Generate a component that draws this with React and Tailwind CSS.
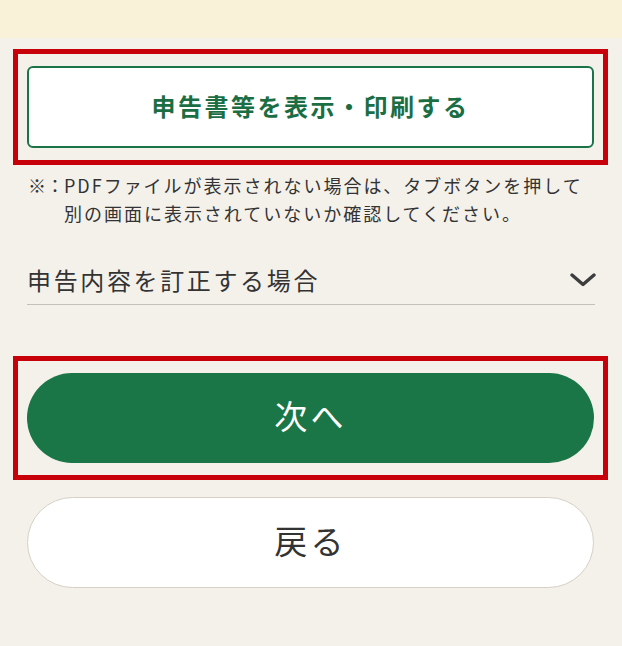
import React from "react";

const FONT = { fontFamily: '"Noto Sans CJK JP", "Noto Sans", sans-serif' };

// ─── Chevron ────────────────────────────────────────────────────────────────
const Chevron = () => (
  <svg width="26" height="14" viewBox="0 0 26 14" fill="none">
    <polyline
      points="2,2 13,11.5 24,2"
      stroke="#3d3d3d"
      strokeWidth="3.4"
      strokeLinecap="round"
      strokeLinejoin="round"
    />
  </svg>
);

// ─── Red annotation frame ───────────────────────────────────────────────────
const Highlight = ({ children, className = "" }) => (
  <div className={`border-[5px] border-[#c8000a] px-[9px] ${className}`}>{children}</div>
);

// ─── Page ───────────────────────────────────────────────────────────────────
const App = () => (
  <div className="min-h-[646px] w-full bg-[#f4f1eb] text-[#333]" style={FONT}>
    <div className="h-[38px] bg-[#faf1d9]" />

    <div className="pt-[11px] pl-[13px] pr-[14px]">
      <Highlight className="py-[12px]">
        <button className="flex h-[82px] w-full items-center justify-center rounded-[6px] border-2 border-[#1b7447] bg-white pb-[3px] text-[24px] font-bold tracking-[2.5px] text-[#1b6e43]">
          申告書等を表示・印刷する
        </button>
      </Highlight>

      <div className="mt-[6px] flex pl-[15px] text-[18px] leading-[28px] tracking-[0.11em] text-[#333]">
        <span className="w-[36px] shrink-0 tracking-normal">※：</span>
        <p className="whitespace-nowrap">
          PDFファイルが表示されない場合は、タブボタンを押して
          <br />
          別の画面に表示されていないか確認してください。
        </p>
      </div>

      <button className="mx-[14px] mt-[29px] flex h-[49px] w-[568px] items-center justify-between border-b border-[#c4c0b8] text-[24px] tracking-[0.11em] text-[#333]">
        <span>申告内容を訂正する場合</span>
        <span className="mr-[-1px] flex items-center">
          <Chevron />
        </span>
      </button>

      <Highlight className="mt-[51px] py-[12px]">
        <button className="flex h-[90px] w-full items-center justify-center rounded-full bg-[#1b7647] pb-[4px] text-[33px] tracking-[0.1em] text-white">
          次へ
        </button>
      </Highlight>

      <div className="px-[14px] pt-[17px]">
        <button className="flex h-[91px] w-full items-center justify-center rounded-full border border-[#d6d0c6] bg-white pb-[4px] text-[33px] tracking-[0.1em] text-[#333]">
          戻る
        </button>
      </div>
    </div>
  </div>
);

export default App;
